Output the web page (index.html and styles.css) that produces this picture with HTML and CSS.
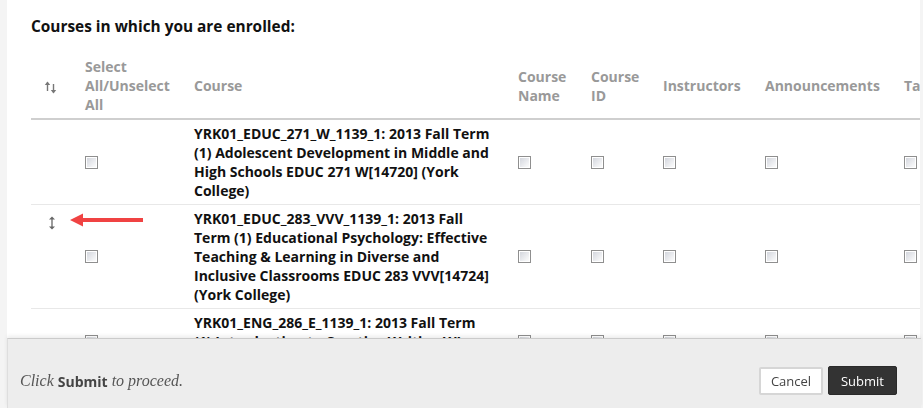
FILE: index.html
```html
<!DOCTYPE html>
<html>
<head>
<meta charset="utf-8">
<link rel="stylesheet" href="styles.css">
</head>
<body>
<div class="page">
  <h2 class="title">Courses in which you are enrolled:</h2>
  <table class="courses">
    <colgroup>
      <col class="c-sort"><col class="c-sel"><col class="c-course"><col class="c-name"><col class="c-id"><col class="c-inst"><col class="c-ann"><col class="c-task">
    </colgroup>
    <thead>
      <tr>
        <th class="sort-cell">
          <svg class="sort-icon" width="14" height="13" viewBox="0 0 14 13">
            <path d="M3.5 1.5 L3.5 10" stroke="#777" stroke-width="1.4" fill="none"/>
            <path d="M0.8 4 L3.5 0.6 L6.2 4 Z" fill="#777"/>
            <path d="M9.5 3 L9.5 11.5" stroke="#777" stroke-width="1.4" fill="none"/>
            <path d="M6.8 9 L9.5 12.4 L12.2 9 Z" fill="#777"/>
          </svg>
        </th>
        <th>Select All/Unselect All</th>
        <th>Course</th>
        <th>Course Name</th>
        <th>Course ID</th>
        <th>Instructors</th>
        <th>Announcements</th>
        <th>Tasks</th>
      </tr>
    </thead>
    <tbody>
      <tr>
        <td class="drag-cell"></td>
        <td><span class="cb"></span></td>
        <td class="course">YRK01_EDUC_271_W_1139_1: 2013 Fall Term (1) Adolescent Development in Middle and High Schools EDUC 271 W[14720] (York College)</td>
        <td><span class="cb"></span></td>
        <td><span class="cb"></span></td>
        <td><span class="cb"></span></td>
        <td><span class="cb"></span></td>
        <td><span class="cb"></span></td>
      </tr>
      <tr>
        <td class="drag-cell">
          <svg class="drag-icon" width="8" height="14" viewBox="0 0 8 14">
            <path d="M4 2 L4 12" stroke="#666" stroke-width="1.3"/>
            <path d="M1 3.5 L4 0.5 L7 3.5 Z" fill="#666"/>
            <path d="M1 10.5 L4 13.5 L7 10.5 Z" fill="#666"/>
          </svg>
          <svg class="red-arrow" width="74" height="14" viewBox="0 0 74 14">
            <path d="M0 7 L13 0.5 L13 5 L73 5 L73 9 L13 9 L13 13.5 Z" fill="#f04343"/>
          </svg>
        </td>
        <td><span class="cb"></span></td>
        <td class="course">YRK01_EDUC_283_VVV_1139_1: 2013 Fall Term (1) Educational Psychology: Effective Teaching &amp; Learning in Diverse and Inclusive Classrooms EDUC 283 VVV[14724] (York College)</td>
        <td><span class="cb"></span></td>
        <td><span class="cb"></span></td>
        <td><span class="cb"></span></td>
        <td><span class="cb"></span></td>
        <td><span class="cb"></span></td>
      </tr>
      <tr>
        <td class="drag-cell"></td>
        <td><span class="cb"></span></td>
        <td class="course">YRK01_ENG_286_E_1139_1: 2013 Fall Term (1) Introduction to Creative Writing WI ENG 286 E[14731] (York College)</td>
        <td><span class="cb"></span></td>
        <td><span class="cb"></span></td>
        <td><span class="cb"></span></td>
        <td><span class="cb"></span></td>
        <td><span class="cb"></span></td>
      </tr>
    </tbody>
  </table>
</div>
<div class="footer">
  <p class="hint">Click <strong>Submit</strong> to proceed.</p>
  <div class="actions">
    <button class="btn btn-cancel">Cancel</button>
    <button class="btn btn-submit">Submit</button>
  </div>
</div>
</body>
</html>
```
FILE: styles.css
```css
html, body {
  margin: 0;
  padding: 0;
  height: 100%;
  overflow: hidden;
}
body {
  background: #f4f4f4;
  font-family: "Open Sans", "Liberation Sans", sans-serif;
}
.page {
  margin-left: 7px;
  width: 889px;
  height: 100%;
  background: #fff;
  padding: 17px 0 0 24px;
  overflow: hidden;
}
.title {
  margin: 0 0 16px;
  font-size: 15.4px;
  line-height: 20px;
  font-weight: 700;
  color: #111;
  white-space: nowrap;
}
.courses {
  border-collapse: collapse;
  table-layout: fixed;
  width: 963px;
}
.c-sort { width: 44px; }
.c-sel { width: 109px; }
.c-course { width: 324px; }
.c-name { width: 73px; }
.c-id { width: 72px; }
.c-inst { width: 102px; }
.c-ann { width: 139px; }
.c-task { width: 100px; }
.courses th {
  font-size: 14px;
  line-height: 19px;
  font-weight: 700;
  color: #999;
  text-align: left;
  vertical-align: middle;
  padding: 4px 10px;
  border-bottom: 2px solid #cfcfcf;
}
.courses th.sort-cell {
  padding: 4px 0 0 13px;
}
.sort-icon {
  display: block;
}
.courses td {
  font-size: 14px;
  line-height: 19px;
  padding: 4px 10px;
  vertical-align: middle;
  border-bottom: 1px solid #e8e8e8;
}
.courses td.course {
  font-weight: 700;
  color: #111;
  padding-right: 18px;
}
.courses td.drag-cell {
  vertical-align: top;
  padding: 11px 0 0 17px;
  position: relative;
}
.drag-icon {
  display: block;
}
.red-arrow {
  position: absolute;
  left: 39px;
  top: 8px;
}
.cb {
  display: block;
  width: 11px;
  height: 11px;
  border: 1px solid #8f8f8f;
  box-shadow: inset 0 0 0 1px #fff;
  background: linear-gradient(135deg, #cfd2da 0%, #f2f3f5 70%, #ffffff 100%);
}
.footer {
  position: fixed;
  left: 7px;
  right: 2px;
  top: 338px;
  bottom: 0;
  background: #ededed;
  border-top: 1px solid #cbcbcb;
  border-left: 1px solid #dedede;
  box-shadow: 0 -2px 4px rgba(0, 0, 0, 0.08);
  display: flex;
  align-items: flex-start;
  justify-content: space-between;
  padding: 27px 24px 0 12px;
}
.hint {
  margin: 0;
  height: 30px;
  display: flex;
  align-items: center;
  font-family: "Liberation Serif", serif;
  font-style: italic;
  font-size: 16px;
  color: #555;
}
.hint strong {
  font-family: "Open Sans", "Liberation Sans", sans-serif;
  font-style: normal;
  font-size: 14px;
  font-weight: 700;
  margin: 0 4px;
  color: #444;
}
.actions {
  display: flex;
  gap: 5px;
  align-items: center;
}
.btn {
  font-family: "Open Sans", "Liberation Sans", sans-serif;
  font-size: 13px;
  height: 29px;
  padding: 0 14px;
  border-radius: 2px;
  cursor: pointer;
}
.btn-cancel {
  background: #fff;
  color: #444;
  border: 2px solid #d6d6d6;
  height: 28px;
  width: 64px;
  padding: 0;
}
.btn-submit {
  background: #333;
  color: #fff;
  border: 1px solid #2a2a2a;
  width: 69px;
  padding: 0;
}
```
